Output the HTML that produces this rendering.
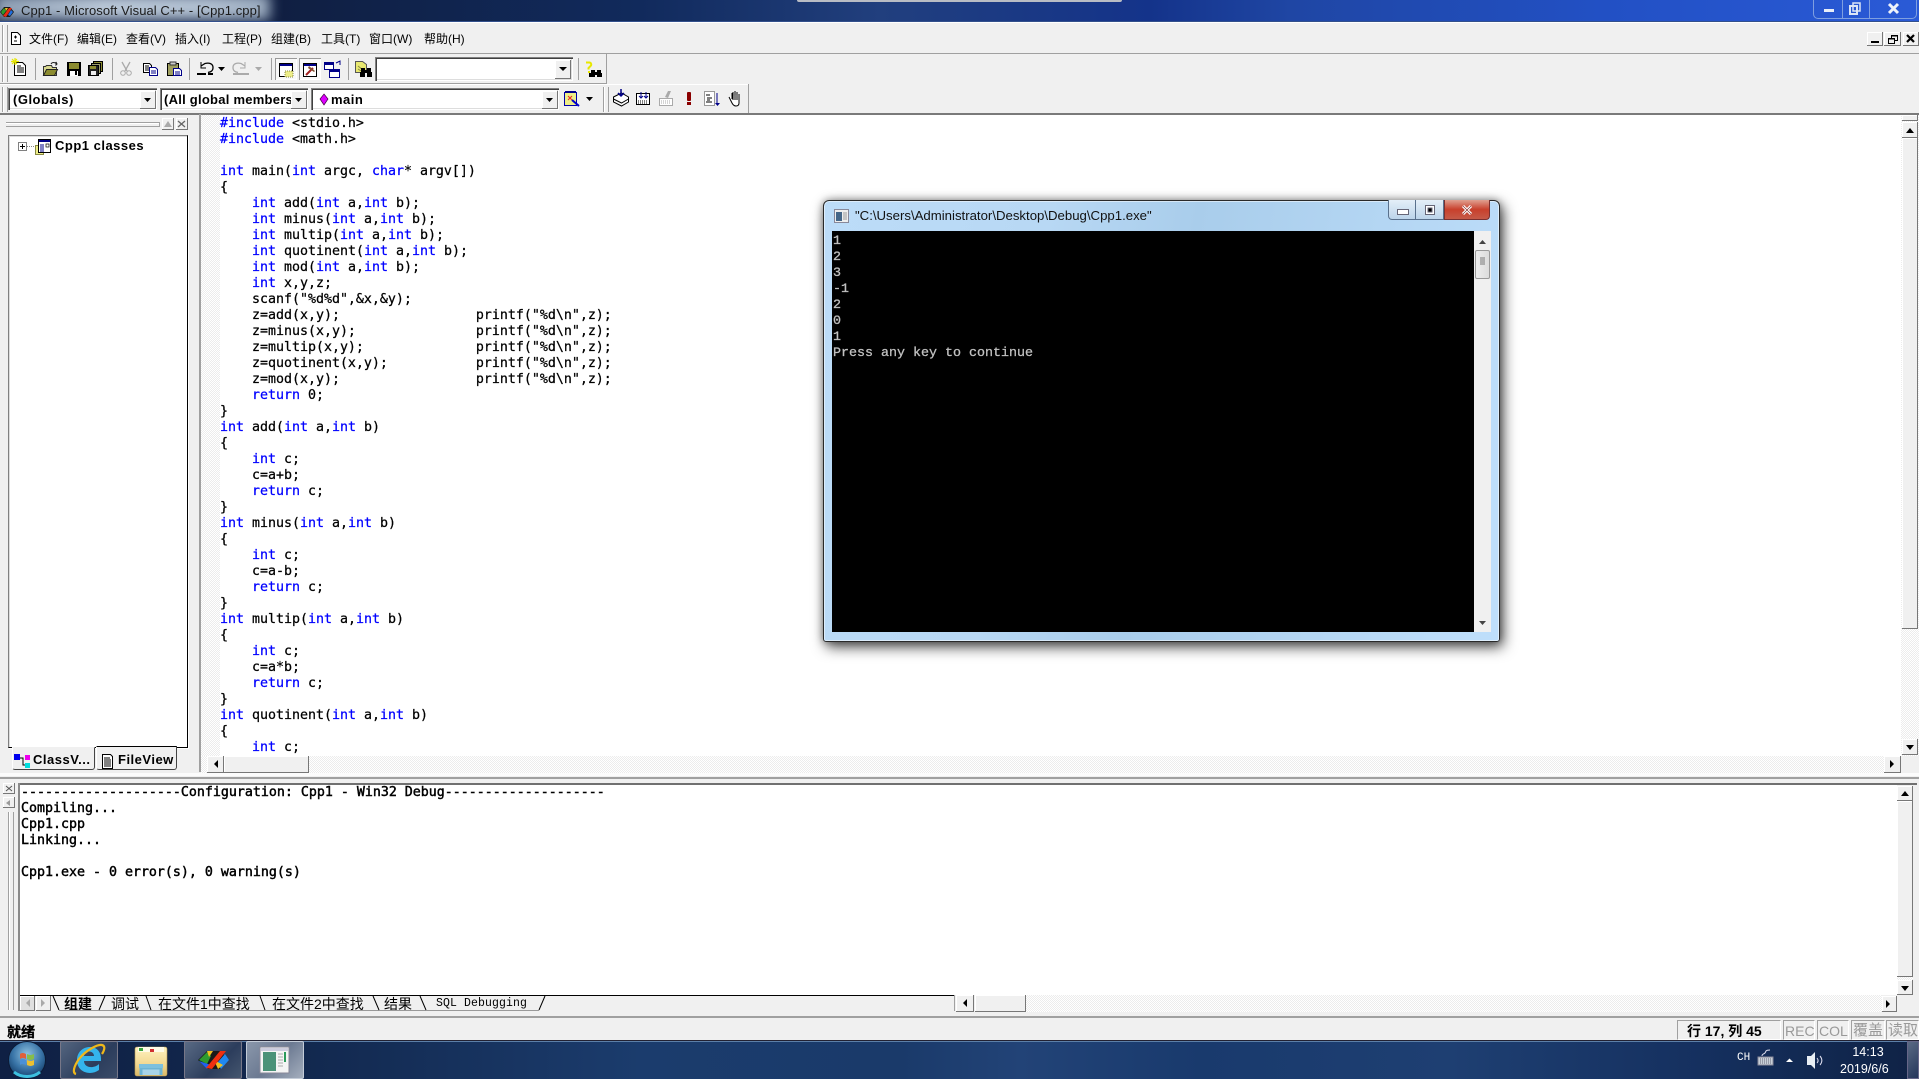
<!DOCTYPE html>
<html><head><meta charset="utf-8"><style>
html,body{margin:0;padding:0;background:#f0f0f0}
#p{position:relative;width:1919px;height:1079px;overflow:hidden;background:#f0f0f0;font-family:"Liberation Sans","WenQuanYi Zen Hei",sans-serif}
#p div,#p span,#p pre{position:absolute;margin:0;box-sizing:border-box}
.m{font:12px/16px "Liberation Sans","WenQuanYi Zen Hei","Noto Sans CJK SC",sans-serif;color:#000;white-space:nowrap}
.b{font:bold 13px/16px "Liberation Sans",sans-serif;color:#000;white-space:nowrap;letter-spacing:.5px}
pre.c{font:13.29px/16px "DejaVu Sans Mono","Liberation Mono",monospace;color:#000;-webkit-text-stroke:.25px currentColor}
pre.c i{font-style:normal;color:#00f}
.h{background-color:#fff;background-image:conic-gradient(#ececec 25%,#fff 0 50%,#ececec 0 75%,#fff 0);background-size:2px 2px}
.r{background:#f0f0f0;box-shadow:inset -1px -1px #777,inset 1px 1px #fff}
.s{background:#fff;box-shadow:inset 1px 1px #808080,inset 2px 2px #404040,inset -1px -1px #fff,inset -2px -2px #ddd}
.l{background:#a0a0a0}
.w{background:#fff}
</style></head><body><div id="p">

<!-- title bar -->
<div style="left:0;top:0;width:1919px;height:21px;background:linear-gradient(90deg,#0f1d3c 0,#101f42 280px,#112a5c 640px,#213f7e 880px,#14338a 1150px,#1f46a4 1290px,#2250c4 1600px,#2a5ad6 1919px)"></div>
<div style="left:0;top:0;width:290px;height:21px;overflow:hidden"><div style="left:-6px;top:-6px;width:276px;height:26px;background:linear-gradient(90deg,#8c9db2,#bac8d8 40%,#b0bfd0 80%,#98a9bd);filter:blur(6px)"></div></div>
<div style="left:0;top:21px;width:1919px;height:1px;background:#33508c"></div>
<div style="left:0;top:22px;width:1919px;height:1px;background:#fff"></div>
<div style="left:0;top:23px;width:1919px;height:31px;background:#f0f0f0"></div>
<span style="left:21px;top:3px;font:13px/16px 'Liberation Sans',sans-serif;color:#1b1b1b;white-space:nowrap;letter-spacing:.07px">Cpp1 - Microsoft Visual C++ - [Cpp1.cpp]</span>
<div style="left:797px;top:0;width:325px;height:2px;background:#b8bcc4;border-radius:0 0 4px 4px"></div>
<!-- caption buttons -->
<div style="left:1813px;top:-2px;width:104px;height:21px;border:1px solid #7f9fe0;border-radius:0 0 5px 5px"></div>
<div style="left:1842px;top:0;width:1px;height:18px;background:#7f9fe0"></div>
<div style="left:1869px;top:0;width:1px;height:18px;background:#7f9fe0"></div>
<div style="left:1824px;top:9px;width:10px;height:3px;background:#e8eef8"></div>

<!-- lines -->
<div class="l" style="left:0;top:53px;width:1919px;height:1px"></div>
<div class="l" style="left:0;top:83px;width:606px;height:1px"></div>
<div class="l" style="left:606px;top:54px;width:1px;height:30px"></div>
<div class="w" style="left:0;top:84px;width:748px;height:1px"></div>
<div class="l" style="left:748px;top:84px;width:1px;height:29px"></div>
<div style="left:0;top:113px;width:1919px;height:2px;background:#7a7a7a"></div>
<!-- grips -->
<div class="l" style="left:2px;top:25px;width:1px;height:27px"></div><div class="l" style="left:7px;top:25px;width:1px;height:27px"></div><div class="w" style="left:3px;top:25px;width:1px;height:27px"></div>
<div class="l" style="left:2px;top:56px;width:1px;height:26px"></div><div class="l" style="left:7px;top:56px;width:1px;height:26px"></div><div class="w" style="left:3px;top:56px;width:1px;height:26px"></div>
<div class="l" style="left:2px;top:87px;width:1px;height:25px"></div><div class="l" style="left:7px;top:87px;width:1px;height:25px"></div><div class="w" style="left:3px;top:87px;width:1px;height:25px"></div>
<div class="l" style="left:603px;top:87px;width:1px;height:25px"></div><div class="l" style="left:608px;top:87px;width:1px;height:25px"></div><div class="w" style="left:604px;top:87px;width:1px;height:25px"></div>

<!-- menu -->
<span class="m" style="left:29px;top:31px">文件(F)</span>
<span class="m" style="left:77px;top:31px">编辑(E)</span>
<span class="m" style="left:126px;top:31px">查看(V)</span>
<span class="m" style="left:175px;top:31px">插入(I)</span>
<span class="m" style="left:222px;top:31px">工程(P)</span>
<span class="m" style="left:271px;top:31px">组建(B)</span>
<span class="m" style="left:321px;top:31px">工具(T)</span>
<span class="m" style="left:369px;top:31px">窗口(W)</span>
<span class="m" style="left:424px;top:31px">帮助(H)</span>

<!-- mdi buttons -->
<div class="r" style="left:1867px;top:32px;width:16px;height:14px"></div>
<div class="r" style="left:1884px;top:32px;width:17px;height:14px"></div>
<div class="r" style="left:1903px;top:32px;width:16px;height:14px"></div>

<!-- pressed toolbar buttons -->
<div style="left:275px;top:58px;width:22px;height:22px;background:#f8f8f8;box-shadow:inset 1px 1px #999,inset -1px -1px #fff"></div>
<div style="left:299px;top:58px;width:22px;height:22px;background:#f8f8f8;box-shadow:inset 1px 1px #999,inset -1px -1px #fff"></div>

<!-- find combo -->
<div class="s" style="left:375px;top:57px;width:198px;height:24px"></div>
<div class="r" style="left:555px;top:60px;width:16px;height:19px"></div>

<!-- row 2 combos -->
<div class="s" style="left:8px;top:88px;width:149px;height:22px"></div>
<div class="r" style="left:140px;top:91px;width:16px;height:18px"></div>
<div class="s" style="left:160px;top:88px;width:148px;height:22px"></div>
<div class="r" style="left:291px;top:91px;width:16px;height:18px"></div>
<div class="s" style="left:311px;top:88px;width:248px;height:22px"></div>
<div class="r" style="left:542px;top:91px;width:16px;height:18px"></div>
<span class="b" style="left:13px;top:92px">(Globals)</span>
<span class="b" style="left:164px;top:92px;width:127px;overflow:hidden;letter-spacing:.25px">(All global members)</span>
<span class="b" style="left:331px;top:92px">main</span>

<!-- left pane -->
<div class="l" style="left:6px;top:122px;width:153px;height:1px"></div>
<div class="w" style="left:6px;top:123px;width:153px;height:1px"></div>
<div class="l" style="left:6px;top:126px;width:153px;height:1px"></div>
<div class="l" style="left:159px;top:122px;width:1px;height:5px"></div>
<div class="r" style="left:162px;top:118px;width:12px;height:12px"></div>
<div class="r" style="left:176px;top:118px;width:12px;height:12px"></div>
<div style="left:8px;top:135px;width:180px;height:613px;background:#fff;border:1px solid;border-color:#808080 #000 #000 #808080;box-shadow:inset 1px 1px #ddd,1px 1px #fff"></div>
<span class="b" style="left:55px;top:138px">Cpp1 classes</span>
<div style="left:12px;top:747px;width:83px;height:23px;background:#f0f0f0;border:1px solid;border-color:#f0f0f0 #444 #444 #fff;border-radius:0 0 3px 3px"></div>
<div style="left:96px;top:746px;width:81px;height:24px;background:#f0f0f0;border:1px solid;border-color:#000 #444 #444 #fff;border-radius:0 0 3px 3px"></div>
<span class="b" style="left:33px;top:752px">ClassV...</span>
<span class="b" style="left:118px;top:752px">FileView</span>

<!-- editor -->
<div class="l" style="left:199px;top:114px;width:2px;height:658px"></div>
<div class="w" style="left:201px;top:115px;width:1700px;height:641px"></div>
<div class="h" style="left:201px;top:115px;width:19px;height:641px"></div>
<pre class="c" style="left:220px;top:116px"><i>#include</i> &lt;stdio.h&gt;
<i>#include</i> &lt;math.h&gt;

<i>int</i> main(<i>int</i> argc, <i>char</i>* argv[])
{
    <i>int</i> add(<i>int</i> a,<i>int</i> b);
    <i>int</i> minus(<i>int</i> a,<i>int</i> b);
    <i>int</i> multip(<i>int</i> a,<i>int</i> b);
    <i>int</i> quotinent(<i>int</i> a,<i>int</i> b);
    <i>int</i> mod(<i>int</i> a,<i>int</i> b);
    <i>int</i> x,y,z;
    scanf("%d%d",&amp;x,&amp;y);
    z=add(x,y);                 printf("%d\n",z);
    z=minus(x,y);               printf("%d\n",z);
    z=multip(x,y);              printf("%d\n",z);
    z=quotinent(x,y);           printf("%d\n",z);
    z=mod(x,y);                 printf("%d\n",z);
    <i>return</i> 0;
}
<i>int</i> add(<i>int</i> a,<i>int</i> b)
{
    <i>int</i> c;
    c=a+b;
    <i>return</i> c;
}
<i>int</i> minus(<i>int</i> a,<i>int</i> b)
{
    <i>int</i> c;
    c=a-b;
    <i>return</i> c;
}
<i>int</i> multip(<i>int</i> a,<i>int</i> b)
{
    <i>int</i> c;
    c=a*b;
    <i>return</i> c;
}
<i>int</i> quotinent(<i>int</i> a,<i>int</i> b)
{
    <i>int</i> c;</pre>
<!-- editor scrollbars -->
<div class="h" style="left:201px;top:756px;width:1718px;height:17px"></div>
<div class="r" style="left:207px;top:756px;width:17px;height:17px"></div>
<div class="r" style="left:224px;top:756px;width:85px;height:17px"></div>
<div class="r" style="left:1884px;top:756px;width:17px;height:17px"></div>
<div class="h" style="left:1901px;top:115px;width:18px;height:641px"></div>
<div class="r" style="left:1902px;top:115px;width:16px;height:6px"></div>
<div class="r" style="left:1902px;top:122px;width:16px;height:16px"></div>
<div class="r" style="left:1902px;top:138px;width:16px;height:491px"></div>
<div class="r" style="left:1902px;top:739px;width:16px;height:16px"></div>
<div style="left:1901px;top:756px;width:18px;height:17px;background:#f0f0f0"></div>

<!-- output -->
<div class="l" style="left:0;top:777px;width:1919px;height:2px"></div>
<div class="w" style="left:0;top:773px;width:1919px;height:3px;opacity:.8"></div>
<div class="r" style="left:3px;top:783px;width:12px;height:11px"></div>
<div class="r" style="left:3px;top:797px;width:12px;height:11px"></div>
<div class="l" style="left:8px;top:812px;width:1px;height:198px"></div>
<div class="l" style="left:13px;top:812px;width:1px;height:198px"></div>
<div class="w" style="left:9px;top:812px;width:1px;height:198px"></div>
<div style="left:18px;top:783px;width:1899px;height:2px;background:#707070"></div>
<div style="left:18px;top:783px;width:2px;height:228px;background:#8a8a8a"></div>
<div class="w" style="left:20px;top:785px;width:1877px;height:210px"></div>
<pre class="c" style="left:21px;top:785px;-webkit-text-stroke:.45px #000">--------------------Configuration: Cpp1 - Win32 Debug--------------------
Compiling...
Cpp1.cpp
Linking...

Cpp1.exe - 0 error(s), 0 warning(s)</pre>
<div class="r" style="left:1897px;top:786px;width:16px;height:15px"></div>
<div class="r" style="left:1897px;top:801px;width:16px;height:176px"></div>
<div class="h" style="left:1897px;top:977px;width:16px;height:3px"></div>
<div class="r" style="left:1897px;top:980px;width:16px;height:15px"></div>
<!-- output tabs -->
<div style="left:20px;top:995px;width:934px;height:1px;background:#000"></div>
<div style="left:20px;top:996px;width:934px;height:15px;background:#f0f0f0"></div>
<div class="r" style="left:20px;top:996px;width:15px;height:15px;background:#e0e0e0"></div>
<div class="r" style="left:36px;top:996px;width:15px;height:15px"></div>
<span class="m" style="left:64px;top:996px;font-weight:bold;font-size:14px">组建</span>
<span class="m" style="left:111px;top:996px;font-size:14px">调试</span>
<span class="m" style="left:158px;top:996px;font-size:14px">在文件1中查找</span>
<span class="m" style="left:272px;top:996px;font-size:14px">在文件2中查找</span>
<span class="m" style="left:384px;top:996px;font-size:14px">结果</span>
<span style="left:436px;top:996px;font:11.5px/16px 'Liberation Mono',monospace;color:#000;white-space:pre;letter-spacing:.1px">SQL Debugging</span>
<div class="l" style="left:954px;top:995px;width:1px;height:16px"></div>
<div class="r" style="left:956px;top:995px;width:18px;height:17px"></div>
<div class="r" style="left:975px;top:995px;width:51px;height:17px"></div>
<div class="h" style="left:1026px;top:995px;width:856px;height:17px"></div>
<div class="r" style="left:1882px;top:996px;width:15px;height:16px"></div>
<div style="left:1897px;top:996px;width:16px;height:16px;background:#f0f0f0"></div>

<!-- status -->
<div class="l" style="left:0;top:1016px;width:1919px;height:2px"></div>
<span class="m" style="left:7px;top:1024px;font-weight:bold;font-size:14px;-webkit-text-stroke:.3px #000">就绪</span>
<div style="left:1677px;top:1020px;width:104px;height:20px;border:1px solid;border-color:#a0a0a0 #fff #fff #a0a0a0"></div>
<div style="left:1783px;top:1020px;width:32px;height:20px;border:1px solid;border-color:#a0a0a0 #fff #fff #a0a0a0"></div>
<div style="left:1817px;top:1020px;width:32px;height:20px;border:1px solid;border-color:#a0a0a0 #fff #fff #a0a0a0"></div>
<div style="left:1851px;top:1020px;width:34px;height:20px;border:1px solid;border-color:#a0a0a0 #fff #fff #a0a0a0"></div>
<div style="left:1886px;top:1020px;width:33px;height:20px;border:1px solid;border-color:#a0a0a0 #fff #fff #a0a0a0"></div>
<span class="m" style="left:1687px;top:1023px;font-weight:bold;font-size:14px">行 17, 列 45</span>
<span class="b" style="left:1785px;top:1023px;color:#999;font-weight:normal;font-size:14px;letter-spacing:0">REC</span>
<span class="b" style="left:1819px;top:1023px;color:#999;font-weight:normal;font-size:14px;letter-spacing:0">COL</span>
<span class="m" style="left:1853px;top:1023px;color:#999;font-size:15px">覆盖</span>
<span class="m" style="left:1888px;top:1023px;color:#999;font-size:15px">读取</span>

<!-- taskbar -->
<div style="left:0;top:1040px;width:1919px;height:39px;background:linear-gradient(90deg,#0f2044 0,#12284e 300px,#1b3c6d 640px,#1a3a6a 900px,#224377 1020px,#193a6d 1200px,#1e3f72 1450px,#15305f 1700px,#0f2245 1919px)"></div>
<div style="left:0;top:1040px;width:1919px;height:1px;background:#223"></div>
<div style="left:0;top:1041px;width:1919px;height:1px;background:#5c7fa8"></div>
<div style="left:60px;top:1041px;width:58px;height:38px;background:linear-gradient(135deg,#54657f,#2c3d5c 60%,#3a4b68);border:1px solid #778;border-radius:2px"></div>
<div style="left:184px;top:1041px;width:58px;height:38px;background:linear-gradient(135deg,#596a84,#2c3d5c 60%,#45566f);border:1px solid #778;border-radius:2px"></div>
<div style="left:246px;top:1041px;width:58px;height:38px;background:linear-gradient(135deg,#8a97ab,#6c7a92 50%,#a4aebd);border:1px solid #c4ccd8;border-radius:2px"></div>
<div style="left:1907px;top:1041px;width:12px;height:38px;background:linear-gradient(135deg,#5a6a84,#24365a);border:1px solid #668"></div>
<span style="left:1737px;top:1051px;font:11px/14px 'Liberation Mono',monospace;color:#fff">CH</span>
<span style="left:1852px;top:1045px;width:32px;text-align:center;font:12.5px/14px 'Liberation Sans',sans-serif;color:#fff">14:13</span>
<span style="left:1840px;top:1062px;font:12.5px/14px 'Liberation Sans',sans-serif;color:#fff">2019/6/6</span>

<!-- icons -->
<svg style="position:absolute;left:0;top:0" width="1919" height="1079" viewBox="0 0 1919 1079" fill="none">
<!-- title icon: VC logo -->
<path d="M0 12l4-5h6l4 5-4 5H4z" fill="#1a1a1a"/><path d="M1 12l3-4 2 3-3 4z" fill="#2e9a2e"/><path d="M3 16l6-8h3L6 17z" fill="#e82a10"/><path d="M10 16l3-4-2-2-3 5z" fill="#2070e0"/><path d="M5 8h3l-2 3z" fill="#f0c020"/>
<!-- caption restore / close -->
<rect x="1850" y="6" width="7" height="8" stroke="#dce6f6" stroke-width="2"/><rect x="1853" y="3" width="7" height="8" stroke="#dce6f6" stroke-width="1.500"/>
<path d="M1889 4l9 9M1898 4l-9 9" stroke="#eef2fa" stroke-width="3"/>
<!-- mdi icons -->
<rect x="1871" y="41" width="8" height="2" fill="#000"/>
<path d="M1888.500 38.500h6v5h-6zM1891.500 38v-2.500h6v5h-3" stroke="#000"/><rect x="1888" y="38" width="7" height="1.500" fill="#000"/><rect x="1891" y="35" width="7" height="1.500" fill="#000"/>
<path d="M1907 35l7 7M1914 35l-7 7" stroke="#000" stroke-width="2.200"/>
<!-- menu doc -->
<path d="M11.500 32.500h6l3 3v9h-9z" fill="#fff" stroke="#000"/><path d="M14 37h3M14 41h3M15.500 35.500v3" stroke="#000"/>
<!-- new -->
<path d="M14.500 62.500h8l3 3v10h-11z" fill="#fff" stroke="#000"/><path d="M17 66h4M17 68h7M17 70h7M17 72h7" stroke="#000"/><path d="M15 58v7M11 61.500h8M12 59l5 5M17 59l-5 5" stroke="#e6e600" stroke-width="1.200"/>
<!-- open -->
<path d="M43.500 75.500v-9h2l1-1h5l1 2h4v8z" fill="#d8d890" stroke="#333"/><path d="M43.500 75.500l3-6h11l-3 6z" fill="#8c8c30" stroke="#222"/><path d="M51 64c1-2 4-2 6 0M57 64l-1-2v3z" stroke="#222"/>
<!-- save -->
<rect x="67" y="62" width="14" height="14" fill="#000"/><rect x="69" y="63" width="10" height="6" fill="#8c8c30"/><rect x="70" y="71" width="8" height="5" fill="#fff"/><rect x="75" y="71" width="2" height="4" fill="#000"/>
<!-- save all -->
<rect x="93.500" y="61.500" width="9" height="10" fill="#8c8c30" stroke="#000"/><rect x="91.500" y="63.500" width="9" height="10" fill="#a0a070" stroke="#000"/><rect x="88.500" y="65.500" width="10" height="10" fill="#222" stroke="#000"/><rect x="90" y="66" width="6" height="3" fill="#8c8c30"/><rect x="91" y="71" width="5" height="4" fill="#eee"/>
<!-- cut -->
<path d="M122 62l5 9M130 62l-5 9" stroke="#aaa" stroke-width="1.300"/><circle cx="123" cy="73" r="2.300" stroke="#aaa"/><circle cx="129" cy="73" r="2.300" stroke="#aaa"/>
<!-- copy -->
<path d="M143.500 63.500h6l2 2v7h-8z" fill="#fff" stroke="#000"/><path d="M145 66h4M145 68h4M145 70h4" stroke="#000"/><path d="M149.500 67.500h6l2 2v6h-8z" fill="#fff" stroke="#008"/><path d="M151 71h5M151 73h5" stroke="#008"/>
<!-- paste -->
<rect x="167.500" y="63.500" width="11" height="12" fill="#a0a060" stroke="#000"/><rect x="170" y="62" width="6" height="3" fill="#ccc" stroke="#333"/><path d="M173.500 68.500h6l2 2v5h-8z" fill="#fff" stroke="#008"/><path d="M175 72h5M175 74h5" stroke="#008"/>
<!-- undo -->
<path d="M201 66l4-2.500c4-1 8 0 8 4s-3 4.500-5 5" stroke="#000" stroke-width="1.300"/><path d="M201 62v6h5" stroke="#000"/><rect x="197" y="73" width="9" height="2" fill="#000"/><rect x="208" y="73" width="5" height="2" fill="#000"/>
<path d="M218 67h7l-3.500 4z" fill="#000"/>
<!-- redo -->
<path d="M245 66l-4-2.500c-4-1-8 0-8 4s3 4.500 5 5" stroke="#aaa" stroke-width="1.300"/><path d="M245 62v6h-5" stroke="#aaa"/><rect x="233" y="73" width="16" height="2" fill="#aaa"/>
<path d="M255 67h7l-3.500 4z" fill="#aaa"/>
<!-- workspace -->
<rect x="279.500" y="63.500" width="13" height="13" fill="#fff" stroke="#000"/><rect x="280" y="64" width="12" height="2" fill="#008"/><rect x="285" y="71" width="8" height="6" fill="#ee8" stroke="#884" stroke-dasharray="1 1"/>
<!-- output -->
<rect x="303.500" y="63.500" width="13" height="13" fill="#fff" stroke="#000"/><rect x="304" y="64" width="12" height="2" fill="#008"/><path d="M306 75l7-7" stroke="#a02020" stroke-width="2"/><path d="M309 66l6 5-1 1-6-4z" fill="#805030"/>
<!-- window list -->
<rect x="324.500" y="62.500" width="9" height="7" fill="#fff" stroke="#008"/><rect x="325" y="63" width="8" height="2" fill="#008"/><rect x="329.500" y="69.500" width="10" height="8" fill="#fff" stroke="#008"/><rect x="330" y="70" width="9" height="2" fill="#008"/><path d="M336 63l4-2v4" stroke="#008"/>
<!-- find in files -->
<path d="M355.500 61.500h7l4 3v8h-11z" fill="#e8e870" stroke="#555"/><path d="M358 66l5 4M358 69l3 2" stroke="#884"/>
<path d="M361 68h4v9h-4zM367 68h4v9h-4zM364 70h4v3h-4zM360 72h2v5h-2zM370 72h2v5h-2z" fill="#000"/>
<!-- combo arrows -->
<path d="M559 67h8l-4 4z" fill="#000"/><path d="M144 98h7l-3.500 4z" fill="#000"/><path d="M295 98h7l-3.500 4z" fill="#000"/><path d="M546 98h7l-3.500 4z" fill="#000"/>
<!-- find help -->
<path d="M586 62.500h3.500a2 2 0 0 1 1 3.500l-2 2v1.500" stroke="#e8e800" stroke-width="2"/><path d="M589 71v2" stroke="#e8e800" stroke-width="2"/>
<path d="M591 70h4v7h-4zM597 70h4v7h-4zM589 73h3v4h-3zM594 72h4v3h-4zM600 73h2v4h-2z" fill="#000"/>
<!-- separators -->
<g fill="#a0a0a0"><rect x="35" y="58" width="1" height="22"/><rect x="112" y="58" width="1" height="22"/><rect x="189" y="58" width="1" height="22"/><rect x="271" y="58" width="1" height="22"/><rect x="348" y="58" width="1" height="22"/><rect x="578" y="58" width="1" height="22"/></g>
<!-- main diamond -->
<path d="M324 94l4 5-4 6-4-6z" fill="#d0f" stroke="#404" stroke-width=".7"/>
<!-- wizard icon -->
<rect x="564.500" y="92.500" width="12" height="13" fill="#ee8" stroke="#00a"/><path d="M568 96l4 4M572 96l-4 4" stroke="#e22"/><path d="M572 100l7 6" stroke="#00c" stroke-width="2"/><rect x="565" y="91" width="11" height="2" fill="#008"/>
<path d="M586 97h7l-3.500 4z" fill="#000"/>
<!-- compile icons -->
<path d="M613.500 97l8-4 7 4v5l-7 4-8-4z" fill="#fff" stroke="#000"/><path d="M613.500 99l8 4 7-4" stroke="#000"/><path d="M621 89v7M618 93l3 3 3-3" stroke="#008" stroke-width="1.500"/>
<rect x="636.500" y="93.500" width="13" height="11" fill="#fff" stroke="#000"/><path d="M638 101h10M638 103h10" stroke="#000" stroke-dasharray="1 1"/><path d="M641 92v6M639 96l2 2 2-2M646 92v6M644 96l2 2 2-2" stroke="#008"/>
<rect x="659.500" y="98.500" width="13" height="7" fill="#fff" stroke="#aaa"/><path d="M661 101h10M661 103h10" stroke="#aaa" stroke-dasharray="1 1"/><path d="M665 97l3-6h3l-3 7z" fill="#aaa"/>
<rect x="687" y="92" width="4" height="9" rx="1" fill="#8a0000"/><rect x="687" y="102" width="4" height="3" fill="#8a0000"/>
<rect x="704.500" y="91.500" width="10" height="14" fill="#fff" stroke="#999"/><path d="M706 95h4M707 98h5M707 100h3M706 102h6" stroke="#000"/><path d="M717 93v11" stroke="#008"/><path d="M715 103h5l-2.500 3z" fill="#008"/>
<path d="M729 97l3 6c1 2 2 3 4 3s3-1 3-3v-9m-2 6v-8m-2 8v-9m-2 9v-8m-1 7v-6" stroke="#000" fill="#fff"/>
<!-- tree -->
<rect x="18.500" y="142.500" width="8" height="8" fill="#fff" stroke="#808080"/><path d="M20 146.500h5M22.500 144v5" stroke="#000"/><path d="M27 146.500h9" stroke="#888" stroke-dasharray="1 1"/>
<rect x="35.500" y="145.500" width="8" height="9" fill="#ee8" stroke="#884"/><rect x="38.500" y="139.500" width="12" height="13" fill="#fff" stroke="#000"/><rect x="39" y="140" width="11" height="2" fill="#008"/><path d="M40 145h4M40 147h4M40 149h4M40 151h4" stroke="#008"/><rect x="46" y="144" width="3" height="3" stroke="#000" stroke-width=".7"/>
<!-- dock buttons -->
<path d="M164 127h8l-4-6z" fill="#aaa"/><path d="M178 121l7 6M185 121l-7 6" stroke="#666" stroke-width="1.300"/>
<!-- tabs icons -->
<rect x="14" y="754" width="6" height="6" fill="#00e"/><rect x="25" y="755" width="5" height="5" fill="#e0e"/><rect x="25" y="763" width="5" height="5" fill="#0dd"/><path d="M20 758h3v7h2" stroke="#000"/>
<path d="M102.500 754.500h8l2 2v12h-10z" fill="#fff" stroke="#000"/><path d="M104 758h6M104 760h7M104 762h7M104 764h7M104 766h7" stroke="#000"/>
<!-- editor scroll arrows -->
<path d="M218 760v8l-4-4z" fill="#000"/><path d="M1890 760v8l4-4z" fill="#000"/>
<path d="M1906 133h8l-4-5z" fill="#000"/><path d="M1906 745h8l-4 5z" fill="#000"/>
<!-- output -->
<path d="M6 786l6 5M12 786l-6 5" stroke="#555"/><path d="M10 800v6l-4-3z" fill="#999"/>
<path d="M1901 796h8l-4-5z" fill="#000"/><path d="M1901 986h8l-4 5z" fill="#000"/>
<path d="M30 999v8l-4-4z" fill="#aaa"/><path d="M41 999v8l4-4z" fill="#aaa"/>
<path d="M967 999v8l-4-4z" fill="#000"/><path d="M1886 1000v8l4-4z" fill="#000"/>
<!-- tab slants -->
<path d="M59 1010.500h480" stroke="#999"/>
<g stroke="#000"><path d="M53 996l6 14M105 996l-6 14M146 996l5 14M260 996l5 14M373 996l6 14M420 996l6 14M545 996l-6 14"/></g>
<!-- start orb -->
<defs><radialGradient id="o" cx=".5" cy=".35" r=".7"><stop offset="0" stop-color="#8fc2e0"/><stop offset=".55" stop-color="#3a75a8"/><stop offset="1" stop-color="#0e3560"/></radialGradient>
<linearGradient id="fo" x1="0" y1="0" x2="0" y2="1"><stop offset="0" stop-color="#fff2c0"/><stop offset=".6" stop-color="#f2d890"/><stop offset="1" stop-color="#d8b868"/></linearGradient></defs>
<circle cx="27" cy="1060" r="18.500" fill="url(#o)" stroke="#0c1b36"/>
<path d="M20 1054c2-1.500 4-1 6 0v5c-2-1-4-1.500-6 0z" fill="#e0603a"/><path d="M27 1054c2 1 4 1.500 7 0v5c-3 1.500-5 1-7 0z" fill="#86bd4a"/><path d="M20 1060c2-1.500 4-1 6 0v5c-2-1-4-1.500-6 0z" fill="#4a90d8"/><path d="M27 1060c2 1 4 1.500 7 0v5c-3 1.500-5 1-7 0z" fill="#ecc030"/>
<path d="M14 1072c7 6 19 6 26 0" stroke="#3dc0e0" stroke-width="3"/>
<!-- IE -->
<path d="M77 1060c0-8 6-13 13-13 7 0 11 5 11 12v2H84c0 7 10 8 15 3v6c-8 6-22 3-22-10z M84 1056h10c0-6-10-6-10 0z" fill="#34b4ec" fill-rule="evenodd"/>
<path d="M76 1074c-4-1-2-8 3-15 7-9 19-15 23-14 4 1 2 6 0 9" stroke="#f0b81a" stroke-width="2.200"/>
<!-- explorer folder -->
<rect x="135" y="1047" width="32" height="29" rx="2" fill="url(#fo)" stroke="#b89a50" stroke-width=".6"/><rect x="138" y="1047" width="26" height="5" fill="#fffbe8"/><rect x="139" y="1048" width="4" height="3" fill="#3aa53a"/><rect x="150" y="1049" width="4" height="3" fill="#d03030"/>
<path d="M141 1075v-7h20v7" stroke="#6cb4d4" stroke-width="3" fill="#a8d4e8"/><rect x="139" y="1064" width="24" height="4" fill="#7cc0de"/>
<!-- VC -->
<path d="M198 1060l9-9h13l9 9-9 9h-13z" fill="#1a1a1a"/><path d="M199 1060l8-8 4 4-4 8z" fill="#2e9a2e"/><path d="M207 1051l6 0-4 6z" fill="#f0c020"/><path d="M199 1061l8 8 4-4z" fill="#2060f0"/><path d="M221 1069l8-9-4-6-8 9z" fill="#2088f0"/><path d="M214 1060l4 9 5-4z" fill="#f0c020"/><path d="M206 1068l14-17h6l-14 18z" fill="#f03010"/>
<!-- console task icon -->
<rect x="260" y="1047" width="29" height="26" fill="#f4f4f4" stroke="#889"/><rect x="261" y="1048" width="27" height="3" fill="#ccd"/><rect x="263" y="1052" width="13" height="19" fill="#4a9278"/><path d="M278 1054h5M278 1057h5M278 1060h5M278 1063h5M278 1066h5" stroke="#aaa"/><rect x="284" y="1052" width="2" height="10" fill="#2a9a5a"/>
<!-- tray -->
<rect x="1758" y="1057" width="15" height="8" fill="#c8d0d8" stroke="#889"/><path d="M1760 1059h11M1760 1061h11M1760 1063h11" stroke="#667" stroke-dasharray="1 1"/><path d="M1762 1056c0-3 3-1 4-5 1-1 3-1 4-1" stroke="#dde"/>
<path d="M1786 1062h7l-3.500-3.500z" fill="#fff"/>
<path d="M1807 1056h4l4-4v17l-4-4h-4z" fill="#e8eef4"/><path d="M1817 1058c1.500 2 1.500 3.500 0 5M1820 1056c2.500 3 2.500 6 0 9" stroke="#dde"/>
</svg>

<!-- console window -->
<div style="left:823px;top:200px;width:677px;height:442px;border:1px solid #2a2a2a;border-radius:6px 6px 3px 3px;background:linear-gradient(100deg,#bcdcf8 0,#b8d8f4 30%,#a9cdeb 50%,#bfdffb 100%);box-shadow:3px 5px 14px rgba(0,0,0,.7),0 0 8px rgba(0,0,0,.35),inset 0 0 0 1px rgba(255,255,255,.5)">
 <svg style="position:absolute;left:10px;top:8px" width="16" height="15" viewBox="0 0 16 15"><rect x=".5" y=".5" width="14" height="13" fill="#eee" stroke="#889"/><rect x="2" y="3" width="6" height="9" fill="#468"/><path d="M9 4h4M9 6h4M9 8h4M9 10h4" stroke="#999"/></svg>
 <span style="left:31px;top:7px;font:13.2px/16px 'Liberation Sans',sans-serif;color:#111;white-space:nowrap">"C:\Users\Administrator\Desktop\Debug\Cpp1.exe"</span>
 <div style="left:564px;top:-1px;width:56px;height:20px;background:linear-gradient(#e4eff8,#bcd4ea);border:1px solid #59708c;border-top:0;border-radius:0 0 0 4px"></div>
 <div style="left:591px;top:-1px;width:1px;height:19px;background:#59708c"></div>
 <div style="left:620px;top:-1px;width:46px;height:20px;background:linear-gradient(#e0a090,#c8402c 50%,#c65a48);border:1px solid #7a3030;border-top:0;border-radius:0 0 4px 0"></div>
 <svg style="position:absolute;left:565px;top:0" width="101" height="19" viewBox="0 0 101 19"><rect x="8.500" y="8.500" width="11" height="5" fill="#fff" stroke="#667"/><rect x="36.500" y="4.500" width="9" height="9" fill="#fff" stroke="#667"/><rect x="39" y="7" width="4" height="4" stroke="#667"/><path d="M74 5l8 8M82 5l-8 8" stroke="#fff" stroke-width="3"/><path d="M74 5l8 8M82 5l-8 8" stroke="#7a2020" stroke-width=".6"/></svg>
 <div style="left:8px;top:30px;width:642px;height:401px;background:#000"></div>
 <pre style="left:9px;top:33px;font:13.33px/16px 'Liberation Mono',monospace;color:#c0c0c0;-webkit-text-stroke:.3px #c0c0c0">1
2
3
-1
2
0
1
Press any key to continue</pre>
 <div style="left:650px;top:30px;width:17px;height:401px;background:#f0f0f0"></div>
 <div style="left:651px;top:49px;width:15px;height:29px;background:linear-gradient(90deg,#eee,#dcdcdc);border:1px solid #999;border-radius:2px"></div>
 <svg style="position:absolute;left:650px;top:30px" width="17" height="401" viewBox="0 0 17 401"><path d="M5 13h7l-3.500-4z" fill="#444"/><path d="M6 27h5M6 29h5M6 31h5M6 33h5" stroke="#777"/><path d="M5 390h7l-3.500 4z" fill="#444"/></svg>
</div>
</div></body></html>
